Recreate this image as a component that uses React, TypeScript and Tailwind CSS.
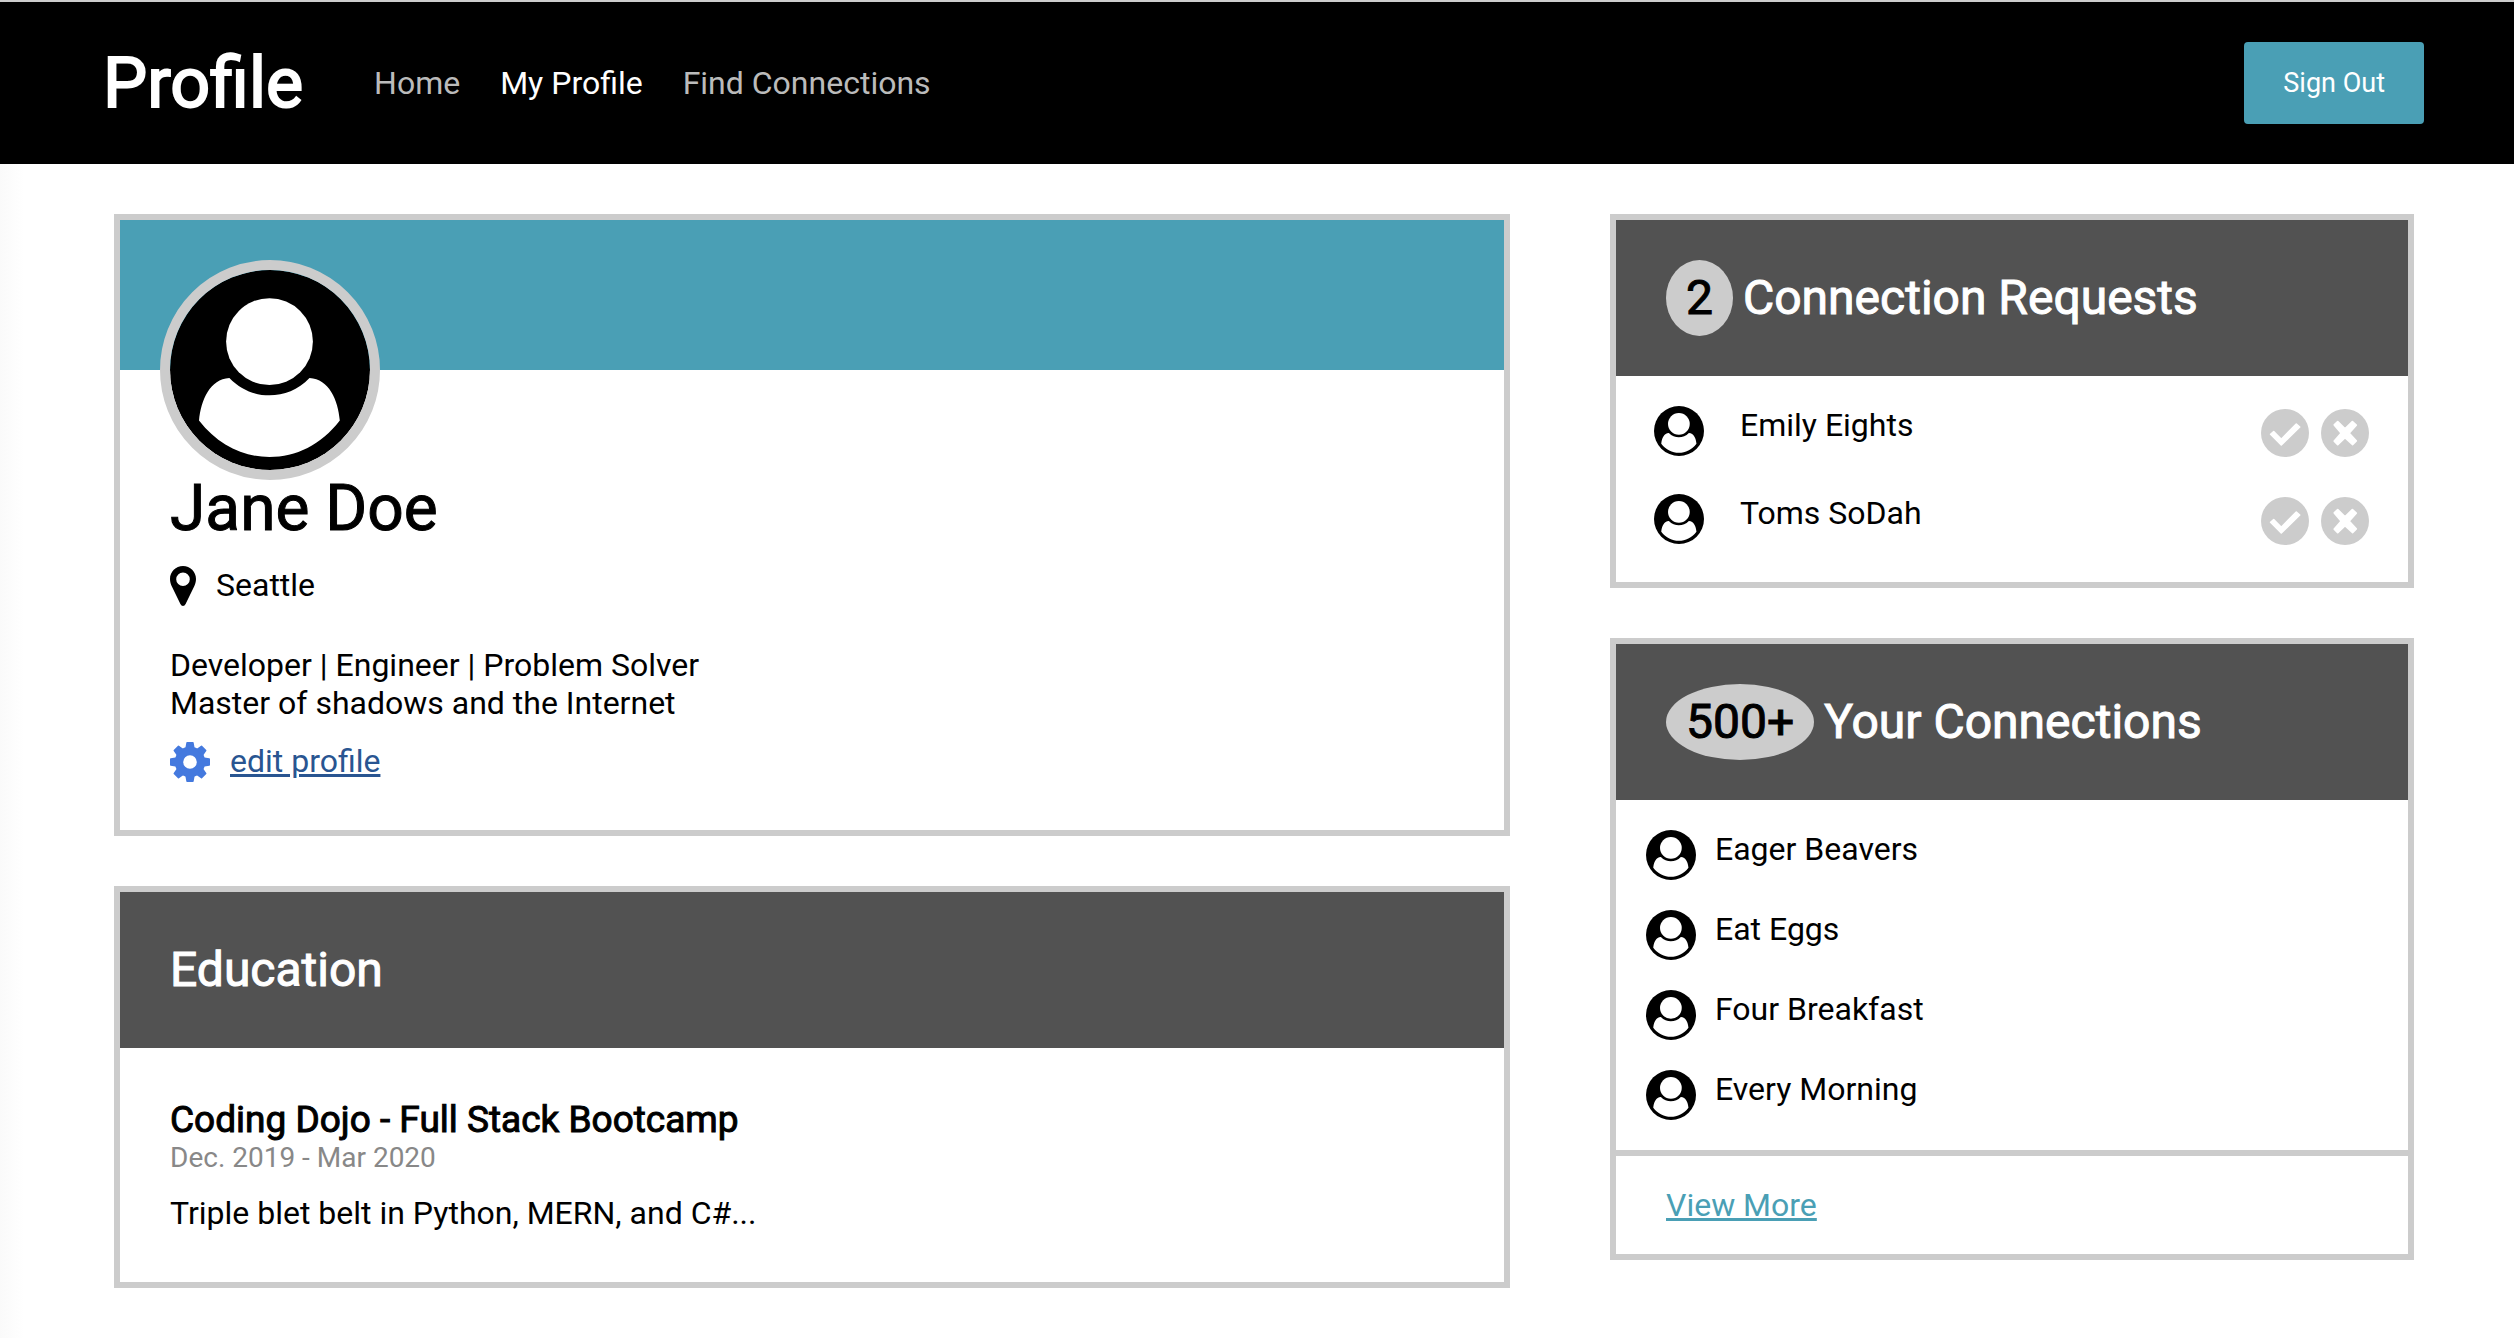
import type { ReactNode } from "react";

const requests = ["Emily Eights", "Toms SoDah"];
const connections = ["Eager Beavers", "Eat Eggs", "Four Breakfast", "Every Morning"];

function UserIcon({ className }: { className: string }) {
  return (
    <svg viewBox="0 0 200 200" className={className} aria-hidden="true">
      <circle cx="100" cy="100" r="100" fill="#000" />
      <circle cx="99.5" cy="71.6" r="43.4" fill="#fff" />
      <path
        d="M59.4 108C40 109 31 130 29 150.5C48 175 73 187 99.5 187C126 187 151 175 169.8 150.5C168 130 159 109 139.5 108C128 120 114 125.3 99.5 125.3C85 125.3 71 120 59.4 108Z"
        fill="#fff"
      />
    </svg>
  );
}

function PinIcon() {
  return (
    <svg viewBox="0 0 26 40" className="h-10 w-[26px]" aria-hidden="true">
      <path
        fillRule="evenodd"
        d="M13 0C5.8 0 0 5.8 0 13C0 16 .8 18.2 2 20.8L10.4 38Q11.3 40 13 40Q14.7 40 15.6 38L24 20.8C25.2 18.2 26 16 26 13C26 5.8 20.2 0 13 0ZM13 6.5A6.8 6.8 0 1 1 13 20.1A6.8 6.8 0 1 1 13 6.5Z"
      />
    </svg>
  );
}

function GearIcon() {
  return (
    <svg viewBox="0 0 40 40" className="size-10" aria-hidden="true">
      <circle cx="20" cy="20" r="11" fill="none" stroke="#4479de" strokeWidth="8.4" />
      {[0, 45, 90, 135, 180, 225, 270, 315].map((angle) => (
        <path
          key={angle}
          d="M15.2 7L16.3 0.7Q16.4 0 17 0H23Q23.6 0 23.7 0.7L24.8 7Z"
          fill="#4479de"
          transform={`rotate(${angle} 20 20)`}
        />
      ))}
    </svg>
  );
}

function AcceptIcon() {
  return (
    <svg viewBox="0 0 48 48" className="size-12" aria-hidden="true">
      <circle cx="24" cy="24" r="24" fill="#ccc" />
      <path
        d="M9.6 25.3L12.7 22.6L20.3 30.3L35.3 15L38.7 18L20.3 36Z"
        fill="#fff"
        stroke="#fff"
        strokeWidth="1.6"
        strokeLinejoin="round"
      />
    </svg>
  );
}

function DeclineIcon() {
  return (
    <svg viewBox="0 0 48 48" className="size-12" aria-hidden="true">
      <circle cx="24" cy="24" r="24" fill="#ccc" />
      <path
        d="M13.3 15.8L16.7 12.7L24 20L31.4 12.7L35.2 16.2L28 24.2L35.2 31.8L31.7 35.5L24 28.5L16.7 35.5L13.3 32L20.3 24.2Z"
        fill="#fff"
        stroke="#fff"
        strokeWidth="1.8"
        strokeLinejoin="round"
      />
    </svg>
  );
}

function Card({ children }: { children: ReactNode }) {
  return <section className="border-[6px] border-[#ccc] bg-white">{children}</section>;
}

function CardHeader({ count, title }: { count?: string; title: string }) {
  return (
    <h2 className="flex min-h-[156px] items-center gap-2.5 bg-[#525252] px-[50px] text-5xl leading-[56px] font-normal text-white [-webkit-text-stroke:1px]">
      {count && <span className="rounded-[50%] bg-[#ccc] px-5 py-2.5 text-black">{count}</span>}
      <span>{title}</span>
    </h2>
  );
}

export default function App() {
  return (
    <div className="min-h-screen bg-white font-['Roboto',sans-serif] text-[32px] leading-[38px] text-black">
      <header className="flex h-[164px] items-center border-t-2 border-[#ccc] bg-black pr-[90px] pl-[103px]">
        <h1 className="text-[70px] leading-[82px] font-normal text-white [-webkit-text-stroke:2px]">Profile</h1>
        <nav className="ml-[71px] flex gap-10 text-[#bbb]">
          <a href="#home">Home</a>
          <a href="#profile" aria-current="page" className="text-white">
            My Profile
          </a>
          <a href="#find">Find Connections</a>
        </nav>
        <button
          type="button"
          className="ml-auto rounded bg-[#4a9fb5] px-[39px] py-[25px] text-[27px] leading-8 text-white"
        >
          Sign Out
        </button>
      </header>

      <main className="grid grid-cols-[349fr_201fr] items-start gap-[100px] bg-[linear-gradient(to_right,#fafafa,#fff_24px)] pt-[50px] pr-[100px] pb-[50px] pl-[114px]">
        <div className="flex flex-col gap-[50px]">
          <Card>
            <div className="h-[150px] bg-[#4a9fb5]" />
            <div className="px-[50px] pb-12">
              <UserIcon className="-mt-[110px] -ml-2.5 size-[220px] rounded-full border-[10px] border-[#ccc]" />
              <h2 className="-mt-2 text-[64px] leading-[74px] font-normal [-webkit-text-stroke:1px]">Jane Doe</h2>
              <p className="mt-5 flex gap-5">
                <PinIcon />
                Seattle
              </p>
              <p className="mt-10">
                Developer | Engineer | Problem Solver
                <br />
                Master of shadows and the Internet
              </p>
              <div className="mt-5 flex gap-5">
                <GearIcon />
                <a href="#edit" className="text-[#295591] underline">
                  edit profile
                </a>
              </div>
            </div>
          </Card>

          <Card>
            <CardHeader title="Education" />
            <div className="p-[50px]">
              <h3 className="text-[37px] leading-[44px] font-normal [-webkit-text-stroke:1px]">
                Coding Dojo - Full Stack Bootcamp
              </h3>
              <p className="text-[28px] leading-8 text-[#888]">Dec. 2019 - Mar 2020</p>
              <p className="mt-5">Triple blet belt in Python, MERN, and C#...</p>
            </div>
          </Card>
        </div>

        <div className="flex flex-col gap-[50px]">
          <Card>
            <CardHeader count="2" title="Connection Requests" />
            <ul className="flex flex-col gap-[37px] pt-[30px] pr-[39px] pb-[37px] pl-[38px]">
              {requests.map((name) => (
                <li key={name} className="flex items-start">
                  <UserIcon className="size-[50px]" />
                  <span className="ml-9">{name}</span>
                  <div className="ml-auto flex gap-3 pt-[3px]">
                    <button type="button" aria-label={`Accept ${name}`}>
                      <AcceptIcon />
                    </button>
                    <button type="button" aria-label={`Decline ${name}`}>
                      <DeclineIcon />
                    </button>
                  </div>
                </li>
              ))}
            </ul>
          </Card>

          <Card>
            <CardHeader count="500+" title="Your Connections" />
            <ul className="flex flex-col gap-[30px] p-[30px]">
              {connections.map((name) => (
                <li key={name} className="flex items-start gap-[19px]">
                  <UserIcon className="size-[50px]" />
                  <span>{name}</span>
                </li>
              ))}
            </ul>
            <div className="border-t-[6px] border-[#ccc] px-[50px] py-[30px]">
              <a href="#more" className="text-[#4a9fb5] underline">
                View More
              </a>
            </div>
          </Card>
        </div>
      </main>
    </div>
  );
}
